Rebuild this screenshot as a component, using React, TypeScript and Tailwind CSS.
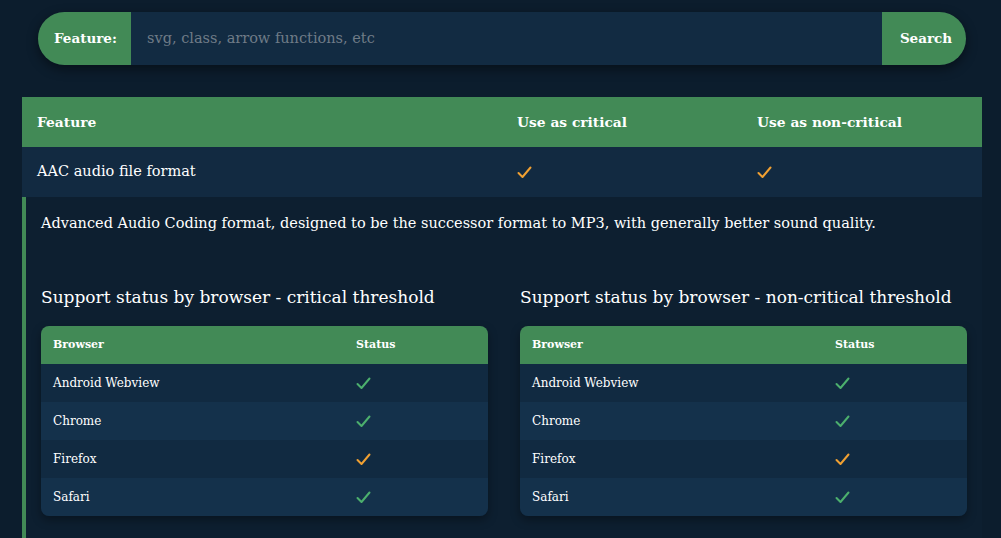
import React from "react";

type Level = "full" | "partial";

interface BrowserRow {
  name: string;
  status: Level;
}

const criticalRows: BrowserRow[] = [
  { name: "Android Webview", status: "full" },
  { name: "Chrome", status: "full" },
  { name: "Firefox", status: "partial" },
  { name: "Safari", status: "full" },
];

const nonCriticalRows: BrowserRow[] = [
  { name: "Android Webview", status: "full" },
  { name: "Chrome", status: "full" },
  { name: "Firefox", status: "partial" },
  { name: "Safari", status: "full" },
];

const Check: React.FC<{ level: Level }> = ({ level }) => (
  <svg
    width="15"
    height="13"
    viewBox="0 0 15 13"
    fill="none"
    className={level === "full" ? "text-[#4caf6d]" : "text-[#f0a032]"}
  >
    <path d="M1.5 7 L5.5 11 L13.5 1.5" stroke="currentColor" strokeWidth="2" strokeLinecap="round" strokeLinejoin="round" />
  </svg>
);

const BrowserTable: React.FC<{ title: string; rows: BrowserRow[] }> = ({ title, rows }) => (
  <div className="flex-1 min-w-0">
    <h3 className="text-[17px] font-light text-white mb-[15px] leading-[28px] whitespace-nowrap">{title}</h3>
    <div className="rounded-lg overflow-hidden shadow-[0_4px_10px_rgba(0,0,0,0.35)]">
      <table className="w-full border-collapse">
        <thead className="bg-[#428a56]">
          <tr>
            <th className="h-[38px] px-3 text-left text-[11px] font-bold text-white w-[303px]">Browser</th>
            <th className="h-[38px] px-3 text-left text-[11px] font-bold text-white">Status</th>
          </tr>
        </thead>
        <tbody>
          {rows.map((row, i) => (
            <tr key={row.name} className={i % 2 === 0 ? "bg-[#112a41]" : "bg-[#14314b]"}>
              <td className="h-[38px] px-3 text-[12px] text-white">{row.name}</td>
              <td className="h-[38px] px-3">
                <Check level={row.status} />
              </td>
            </tr>
          ))}
        </tbody>
      </table>
    </div>
  </div>
);

const App: React.FC = () => {
  return (
    <div className="min-h-[538px] bg-[#0c1d2d] font-['DejaVu_Serif',serif] text-white overflow-hidden">
      <div className="px-[38px] pt-3 pr-[35px]">
        <div className="flex h-[53px] rounded-full shadow-[0_4px_12px_rgba(0,0,0,0.45)]">
          <div className="flex items-center bg-[#428a56] rounded-l-full pl-4 pr-4 w-[93px] text-[13.5px] font-bold">
            Feature:
          </div>
          <input
            className="flex-1 bg-[#122b42] px-4 text-[14.5px] text-white placeholder:text-[#6f7b87] outline-none"
            placeholder="svg, class, arrow functions, etc"
          />
          <button className="flex items-center justify-center bg-[#428a56] rounded-r-full w-[84px] pl-1 text-[13.5px] font-bold text-white">
            Search
          </button>
        </div>
      </div>

      <div className="mx-[22px] mt-8 w-[960px]">
        <div className="flex h-[50px] items-center bg-[#428a56] text-[13.8px] font-bold">
          <div className="w-[480px] px-[15px]">Feature</div>
          <div className="w-[240px] px-[15px]">Use as critical</div>
          <div className="w-[240px] px-[15px]">Use as non-critical</div>
        </div>
        <div className="flex h-[50px] items-center bg-[#122a41] text-[14.5px]">
          <div className="w-[480px] px-[15px]">AAC audio file format</div>
          <div className="w-[240px] px-[15px]">
            <Check level="partial" />
          </div>
          <div className="w-[240px] px-[15px]">
            <Check level="partial" />
          </div>
        </div>
        <div className="border-l-4 border-[#428a56] bg-[#0d1f30] pl-[15px] pr-[15px] pt-[14px] pb-6">
          <p className="text-[14.5px] leading-6 text-white whitespace-nowrap">
            Advanced Audio Coding format, designed to be the successor format to MP3, with generally better sound
            quality.
          </p>
          <div className="flex gap-8 mt-[48px]">
            <BrowserTable title="Support status by browser - critical threshold" rows={criticalRows} />
            <BrowserTable title="Support status by browser - non-critical threshold" rows={nonCriticalRows} />
          </div>
        </div>
      </div>
    </div>
  );
};

export default App;
